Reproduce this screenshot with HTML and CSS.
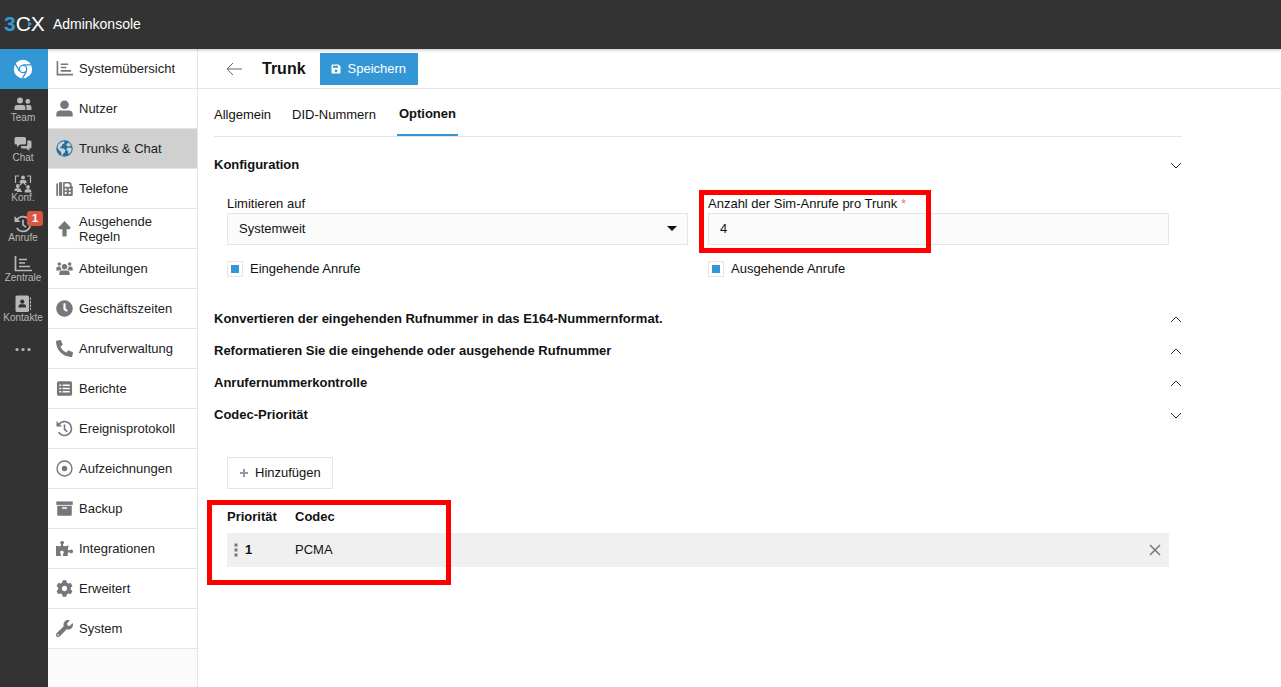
FILE: index.html
```html
<!DOCTYPE html>
<html lang="de">
<head>
<meta charset="utf-8">
<meta name="viewport" content="width=device-width, initial-scale=1">
<title>3CX Adminkonsole</title>
<link rel="stylesheet" href="styles.css">
</head>
<body>
<svg class="sprite" aria-hidden="true">
  <symbol id="chart" viewBox="0 0 18 18"><path d="M1.500 1v14.500H18M5 4.500h8M5 8h6M5 11.500h11" fill="none" stroke="currentColor" stroke-width="1.700"/></symbol>
  <symbol id="history" viewBox="0 0 18 18"><path d="M3 5a7.400 7.400 0 1 1-.2 8.200" fill="none" stroke="currentColor" stroke-width="1.700" transform="translate(0 -.2)"/><path d="M.5 1v6h6z" fill="currentColor"/><path d="M9 4.800v5l3 2.400" fill="none" stroke="currentColor" stroke-width="1.700"/></symbol>
</svg>
<header class="topbar">
  <span class="logo"><b>3</b>CX<svg class="logo-arrow" viewBox="0 0 4 6" aria-hidden="true"><path d="M0 0l4 3-4 3z"/></svg></span>
  <span class="product">Adminkonsole</span>
</header>
<div class="shell">
  <nav class="rail" aria-label="Anwendungen">
    <a href="#" class="rail-item active" aria-label="Webclient"><svg class="chrome" viewBox="0 0 20 20"><circle cx="10" cy="10" r="9.200" fill="#fff"/><circle cx="10" cy="10" r="3.700" fill="#fff" stroke="#3397d5" stroke-width="1.300"/><path d="M10 5.900h8.400M6.400 12.100L2.200 4.800M13.600 12.100L9.400 19.400" stroke="#3397d5" stroke-width="1.300"/></svg></a>
    <a href="#" class="rail-item"><svg class="rail-icon" viewBox="0 0 18 14"><circle cx="6" cy="3.500" r="3"/><circle cx="13.800" cy="4.400" r="2.400"/><path d="M.5 13v-2.300Q.5 8 3.200 8h5.600Q11.400 8 11.400 10.700V13zM12.600 13v-2.500q0-1.400-.8-2.500h3.500q2.200 0 2.200 2.300V13z"/></svg>Team</a>
    <a href="#" class="rail-item"><svg class="rail-icon" viewBox="0 0 18 14"><path d="M2 0h8.500q1.500 0 1.500 1.500V6q0 1.500-1.500 1.500H6L3 10V7.500H2Q.5 7.500.5 6V1.500Q.5 0 2 0z"/><path d="M13.300 3.500h2.700q1.500 0 1.500 1.500v5q0 1.500-1.500 1.500h-.7V14l-3-2.500H8.500Q7 11.500 7 10V9h4.800q1.500 0 1.500-1.500z"/></svg>Chat</a>
    <a href="#" class="rail-item"><svg class="rail-icon tall" viewBox="0 0 18 18"><path d="M5 1H1.500v7M13 1h3.500v7M3 16.500h5M9 7l-3 3M9 7l3 3" fill="none" stroke="currentColor" stroke-width="1.200"/><circle cx="9" cy="2.500" r="2"/><path d="M5.500 8V7Q5.500 5 7.500 5h3q2 0 2 2v1z"/><circle cx="3.800" cy="11" r="1.900"/><path d="M.5 16v-1q0-1.700 1.700-1.700h3.200q1.700 0 1.700 1.700v1z"/><circle cx="14" cy="12" r="1.900"/><path d="M10.700 17.500V16q0-1.700 1.700-1.700h3.200q1.700 0 1.700 1.700v1.500z"/></svg>Konf.</a>
    <a href="#" class="rail-item"><svg class="rail-icon tall"><use href="#history"/></svg>Anrufe<span class="badge">1</span></a>
    <a href="#" class="rail-item"><svg class="rail-icon tall"><use href="#chart"/></svg>Zentrale</a>
    <a href="#" class="rail-item"><svg class="rail-icon tall" viewBox="0 0 18 18"><path fill-rule="evenodd" d="M3 .5h10.500q1.500 0 1.500 1.500v13.500q0 1.500-1.500 1.500H3q-1.500 0-1.500-1.500V2Q1.500.5 3 .5zM8.200 4.500a2.100 2.100 0 1 0 .1 0zM4.500 12.500h7.500v-1q0-2.300-2-2.300H6.500q-2 0-2 2.300z"/><path d="M16 2.500h1v2.500h-1zM16 6h1v2.500h-1zM16 9.500h1V12h-1zM16 13h1v2h-1z"/></svg>Kontakte</a>
    <a href="#" class="rail-item" aria-label="Mehr"><svg class="dots" viewBox="0 0 18 18"><circle cx="3" cy="9.500" r="1.600"/><circle cx="9" cy="9.500" r="1.600"/><circle cx="15" cy="9.500" r="1.600"/></svg></a>
  </nav>
  <nav class="menu" aria-label="Hauptmenü">
    <a href="#" class="menu-item"><svg><use href="#chart"/></svg>Systemübersicht</a>
    <a href="#" class="menu-item"><svg viewBox="0 0 18 18"><circle cx="9" cy="5" r="4.600"/><path d="M.3 17.500v-2.200Q.3 11 4.500 11h9q4.200 0 4.200 4.300v2.200z"/></svg>Nutzer</a>
    <a href="#" class="menu-item selected"><svg viewBox="0 0 18 18"><circle cx="9" cy="9" r="8.700"/><path fill="#d0d0d0" d="M2.500 4.600Q4.700 1.800 8 1.400l1.200.9-.6 1.500-2 .9-.3 1.900-2.100 1 1 1.200 2.600.2 2.200 1.600-.6 2.500-1.800 1.400-.5 2.200-1.300-.6-.5-3.400-2-1.800L1.500 8zM11 4.700l1.300-1.500 1.700-.2 2.200 2.800.2 1.100-1.900-.8-1.700.7-1.600-.6zM11.500 8.500l2.800-.7 2.500 1.300-.7 3.200-2.200 2.500-1.100-.5v-2.500l-1.700-1.200z"/></svg>Trunks &amp; Chat</a>
    <a href="#" class="menu-item"><svg viewBox="0 0 18 18"><rect x=".3" y="3.500" width="1.900" height="13.500" rx=".9"/><rect x="3.200" y="2" width="3.300" height="15" rx="1.200"/><path fill-rule="evenodd" d="M8.500 2h6.300l1.700 1.700V6q1.300.4 1.300 1.600v7.900q0 1.500-1.500 1.500H8.500q-1 0-1-1V3q0-1 1-1zM9.200 3.700v3.500h5.600V4.700h-1v-1zM9.300 9v2.100h2V9zM13.500 9v2.100h2V9zM9.300 12.800v2.100h2v-2.100zM13.500 12.800v2.100h2v-2.100z"/></svg>Telefone</a>
    <a href="#" class="menu-item"><svg viewBox="0 0 18 18"><path d="M9 1l6.700 7.200-1.500 1.600h-2.900v6.700q0 .9-.9.900H7.600q-.9 0-.9-.9V9.800H3.800L2.300 8.200z"/></svg>Ausgehende Regeln</a>
    <a href="#" class="menu-item"><svg viewBox="0 0 18 18"><circle cx="3.500" cy="4.200" r="1.900"/><circle cx="14.500" cy="4.200" r="1.900"/><circle cx="9" cy="7.200" r="2.900"/><path d="M3.500 16v-1.800q0-3 3-3h5q3 0 3 3V16zM.3 9.500Q.3 7 2.500 7h2.200Q4.500 9 6 10.300q-1 .2-1.700.9h-4zM17.700 9.500Q17.700 7 15.500 7h-2.200q.2 2-1.300 3.300 1 .2 1.700.9h4z"/></svg>Abteilungen</a>
    <a href="#" class="menu-item"><svg viewBox="0 0 512 512"><path d="M256,8C119,8,8,119,8,256S119,504,256,504,504,393,504,256,393,8,256,8Zm92.490,313h0l-20,25a16,16,0,0,1-22.490,2.500h0l-67-49.720a40,40,0,0,1-15-31.230V112a16,16,0,0,1,16-16h32a16,16,0,0,1,16,16V256l58,42.500A16,16,0,0,1,348.490,321Z"/></svg>Geschäftszeiten</a>
    <a href="#" class="menu-item"><svg viewBox="0 0 512 512"><path d="M497.390 361.800l-112-48a24 24 0 0 0-28 6.900l-49.600 60.600A370.660 370.660 0 0 1 130.600 204.110l60.600-49.600a23.940 23.940 0 0 0 6.900-28l-48-112A24.160 24.160 0 0 0 122.600.610l-104 24A24 24 0 0 0 0 48c0 256.500 207.900 464 464 464a24 24 0 0 0 23.400-18.600l24-104a24.290 24.290 0 0 0-14.010-27.600z"/></svg>Anrufverwaltung</a>
    <a href="#" class="menu-item"><svg viewBox="0 0 18 18"><rect x="1" y="1.200" width="16" height="15.600" rx="2"/><path d="M3.500 5.500h2M7 5.500h7.500M3.500 9h2M7 9h7.500M3.500 12.500h2M7 12.500h7.500" stroke="#fff" stroke-width="1.500"/></svg>Berichte</a>
    <a href="#" class="menu-item"><svg><use href="#history"/></svg>Ereignisprotokoll</a>
    <a href="#" class="menu-item"><svg viewBox="0 0 18 18"><circle cx="9" cy="9" r="7.900" fill="none" stroke="currentColor" stroke-width="1.500"/><circle cx="9" cy="9" r="2.900"/></svg>Aufzeichnungen</a>
    <a href="#" class="menu-item"><svg viewBox="0 0 18 18"><path d="M.3 1.500h17.400v3.700H.3z"/><path fill-rule="evenodd" d="M1.300 6.200h15.400v9.500q0 1-1 1H2.300q-1 0-1-1zM6.500 7.800v1.400h5V7.800z"/></svg>Backup</a>
    <a href="#" class="menu-item"><svg viewBox="0 0 576 512"><path d="M519.442 288.651c-41.519 0-59.500 31.593-82.058 31.593C377.409 320.244 432 144 432 144s-196.288 80-196.288-3.297c0-35.827 36.288-46.250 36.288-85.985C272 19.216 243.885 0 210.539 0c-34.654 0-66.366 18.891-66.366 56.346 0 41.364 31.711 59.277 31.711 81.750C175.885 207.719 0 166.758 0 166.758v333.237s178.635 41.047 178.635-28.662c0-22.473-40-40.107-40-81.471 0-37.456 29.250-56.346 63.577-56.346 33.673 0 61.788 19.216 61.788 54.717 0 39.735-36.288 50.158-36.288 85.985 0 60.803 129.675 25.730 181.230 25.730 0 0-34.725-120.101 25.827-120.101 35.962 0 46.423 36.152 86.308 36.152C556.712 416 576 387.990 576 354.443c0-34.199-18.962-65.792-56.558-65.792z"/></svg>Integrationen</a>
    <a href="#" class="menu-item"><svg viewBox="0 0 512 512"><path d="M487.400 315.700l-42.600-24.600c4.300-23.200 4.300-47 0-70.200l42.600-24.600c4.900-2.800 7.100-8.600 5.500-14-11.100-35.600-30-67.800-54.700-94.600-3.800-4.100-10-5.100-14.800-2.300L380.800 110c-17.900-15.400-38.500-27.300-60.800-35.100V25.800c0-5.600-3.900-10.500-9.400-11.700-36.700-8.200-74.300-7.800-109.200 0-5.500 1.200-9.400 6.100-9.400 11.700V75c-22.200 7.900-42.800 19.800-60.800 35.100L88.700 85.500c-4.900-2.800-11-1.900-14.800 2.300-24.700 26.700-43.600 58.900-54.700 94.600-1.700 5.400.6 11.200 5.500 14L67.300 221c-4.300 23.200-4.300 47 0 70.200l-42.600 24.600c-4.900 2.800-7.100 8.600-5.500 14 11.100 35.600 30 67.800 54.700 94.600 3.800 4.100 10 5.100 14.800 2.300l42.600-24.600c17.900 15.400 38.500 27.300 60.800 35.100v49.200c0 5.600 3.900 10.500 9.400 11.700 36.700 8.200 74.300 7.800 109.200 0 5.500-1.200 9.400-6.100 9.400-11.700v-49.200c22.200-7.900 42.800-19.800 60.800-35.100l42.600 24.600c4.900 2.800 11 1.900 14.800-2.300 24.700-26.700 43.600-58.900 54.700-94.600 1.500-5.500-.7-11.300-5.600-14.100zM256 336c-44.100 0-80-35.900-80-80s35.900-80 80-80 80 35.900 80 80-35.900 80-80 80z"/></svg>Erweitert</a>
    <a href="#" class="menu-item"><svg viewBox="0 0 512 512"><path d="M507.730 109.100c-2.240-9.030-13.540-12.090-20.120-5.510l-74.360 74.360-67.880-11.310-11.310-67.880 74.360-74.360c6.620-6.620 3.430-17.900-5.660-20.160-47.380-11.740-99.550.91-136.580 37.930-39.640 39.640-50.550 97.100-34.050 147.200L18.740 402.760c-24.990 24.990-24.990 65.510 0 90.500 24.990 24.990 65.510 24.990 90.500 0l213.210-213.210c50.120 16.710 107.470 5.680 147.370-34.220 37.070-37.070 49.700-89.320 37.910-136.730zM64 472c-13.250 0-24-10.750-24-24 0-13.260 10.750-24 24-24s24 10.740 24 24c0 13.250-10.750 24-24 24z"/></svg>System</a>
  </nav>
  <main class="main">
    <div class="toolbar">
      <button type="button" class="back" aria-label="Zurück"><svg viewBox="0 0 16 14"><path d="M16 7H1M7 1L1 7l6 6" fill="none" stroke="currentColor"/></svg></button>
      <h1 class="title">Trunk</h1>
      <button type="submit" form="trunk" class="save"><svg viewBox="0 0 10 10"><path fill-rule="evenodd" d="M1.200.5h6.300l2 2v6.300q0 .7-.7.700H1.200q-.7 0-.7-.7V1.200Q.5.500 1.200.5zM2 1.800v2h5v-2zM5 5.500a1.400 1.400 0 1 0 .1 0z"/></svg>Speichern</button>
    </div>
    <form class="content" id="trunk">
      <nav class="tabs" aria-label="Trunk">
        <a href="#" class="tab">Allgemein</a>
        <a href="#" class="tab">DID-Nummern</a>
        <a href="#" class="tab current" aria-current="page">Optionen</a>
      </nav>
      <section>
        <h2><button type="button" class="panel-head" aria-expanded="true">Konfiguration<svg viewBox="0 0 12 12"><path d="M1 5l5 5 5-5"/></svg></button></h2>
        <div class="panel-body fields">
          <div class="column">
            <label for="limit">Limitieren auf</label>
            <div class="select-box">
              <select id="limit" class="control"><option>Systemweit</option></select>
              <svg class="caret" viewBox="0 0 10 5" aria-hidden="true"><path d="M0 0h10L5 5z"/></svg>
            </div>
            <label class="check"><input type="checkbox" checked>Eingehende Anrufe</label>
          </div>
          <div class="column">
            <label for="calls">Anzahl der Sim-Anrufe pro Trunk <span class="required">*</span></label>
            <input id="calls" class="control" type="text" value="4" required>
            <label class="check"><input type="checkbox" checked>Ausgehende Anrufe</label>
            <div class="mark mark-calls"></div>
          </div>
        </div>
      </section>
      <h2><button type="button" class="panel-head" aria-expanded="false">Konvertieren der eingehenden Rufnummer in das E164-Nummernformat.<svg viewBox="0 0 12 12"><path d="M1 10l5-5 5 5"/></svg></button></h2>
      <h2><button type="button" class="panel-head" aria-expanded="false">Reformatieren Sie die eingehende oder ausgehende Rufnummer<svg viewBox="0 0 12 12"><path d="M1 10l5-5 5 5"/></svg></button></h2>
      <h2><button type="button" class="panel-head" aria-expanded="false">Anrufernummerkontrolle<svg viewBox="0 0 12 12"><path d="M1 10l5-5 5 5"/></svg></button></h2>
      <section>
        <h2><button type="button" class="panel-head" aria-expanded="true">Codec-Priorität<svg viewBox="0 0 12 12"><path d="M1 5l5 5 5-5"/></svg></button></h2>
        <div class="panel-body codecs">
          <button type="button" class="add"><svg viewBox="0 0 8 8"><path d="M4 0v8M0 4h8" fill="none" stroke="currentColor" stroke-width="2"/></svg>Hinzufügen</button>
          <div class="table-box">
            <table class="codec-table">
              <thead><tr><th class="prio">Priorität</th><th>Codec</th><th class="remove"></th></tr></thead>
              <tbody><tr>
                <td class="prio"><span class="rank"><svg viewBox="0 0 4 14" aria-hidden="true"><path d="M.5.500h3v3h-3zM.5 5.500h3v3h-3zM.5 10.500h3v3h-3z"/></svg>1</span></td>
                <td>PCMA</td>
                <td class="remove"><button type="button" class="delete" aria-label="Entfernen"><svg viewBox="0 0 12 12"><path d="M1 1l10 10M11 1L1 11" fill="none" stroke="currentColor" stroke-width="1.500"/></svg></button></td>
              </tr></tbody>
            </table>
            <div class="mark mark-codec"></div>
          </div>
        </div>
      </section>
    </form>
  </main>
</div>
</body>
</html>
```
FILE: styles.css
```css
* { box-sizing: border-box; }

body {
  margin: 0;
  min-height: 100vh;
  display: flex;
  flex-direction: column;
  background: #fff;
  color: #111;
  font: 13px/15px "Liberation Sans", Arial, sans-serif;
}

a { color: inherit; text-decoration: none; }
button, input, select { font: inherit; color: inherit; }
button { padding: 0; border: 0; background: none; cursor: pointer; }
svg { display: block; flex: none; fill: currentColor; }
h1, h2 { margin: 0; }
.sprite { position: absolute; width: 0; height: 0; }

.topbar {
  position: relative;
  display: flex;
  align-items: center;
  gap: 8px;
  height: 49px;
  padding: 0 0 2px 4px;
  background: #333;
  color: #fff;
  box-shadow: 0 1px 3px rgba(0, 0, 0, .25);
}
.logo { position: relative; font-size: 21px; line-height: 24px; }
.logo b { color: #3397d5; }
.logo-arrow { position: absolute; left: 24px; top: 9px; width: 4px; height: 6px; color: #3397d5; }
.product { font-size: 14px; line-height: 16px; }

.shell { flex: 1; display: flex; }

.rail { flex: none; width: 48px; background: #333; color: #b8b8b8; }
.rail-item {
  position: relative;
  display: flex;
  flex-direction: column;
  align-items: center;
  justify-content: center;
  height: 40px;
  padding-right: 2px;
  font-size: 10px;
  line-height: 10px;
}
.rail-item.active { background: #3397d5; }
.rail-icon { width: 18px; height: 14px; margin: 2px 0; }
.rail-icon.tall { height: 18px; margin: 0; }
.dots { width: 18px; height: 18px; }
.chrome { width: 20px; height: 20px; }
.badge {
  position: absolute;
  top: 2px;
  left: 27px;
  width: 16px;
  height: 15px;
  border-radius: 3px;
  background: #d9573f;
  color: #fff;
  font-weight: bold;
  font-size: 11px;
  line-height: 15px;
  text-align: center;
}

.menu { flex: none; width: 150px; border-right: 1px solid #e5e5e5; background: #fbfbfb; }
.menu-item {
  display: flex;
  align-items: center;
  gap: 6px;
  height: 40px;
  padding: 0 20px 0 8px;
  border-bottom: 1px solid #e5e5e5;
  background: #fff;
  color: #222;
}
.menu-item svg { width: 17px; height: 17px; color: #777; }
.menu-item.selected { background: #d0d0d0; }
.menu-item.selected svg { color: #1f6f9f; }

.main { flex: 1; min-width: 0; }
.toolbar {
  display: flex;
  align-items: center;
  height: 40px;
  padding-left: 28px;
  border-bottom: 1px solid #e5e5e5;
}
.back { color: #666; }
.back svg { width: 16px; height: 14px; }
.title { margin: 0 14px 0 20px; font-size: 16px; line-height: 20px; }
.save {
  display: flex;
  align-items: center;
  gap: 7px;
  height: 32px;
  padding: 0 12px 0 11px;
  background: #3397d5;
  color: #fff;
}
.save svg { width: 10px; height: 10px; }

.content { max-width: 1000px; padding: 0 16px; }
.tabs { display: flex; gap: 21px; height: 48px; margin-bottom: 11px; border-bottom: 1px solid #e5e5e5; }
.tab { padding-top: 18px; }
.tab.current {
  height: 47px;
  padding: 17px 2px 0;
  border-bottom: 2px solid #3397d5;
  font-weight: bold;
}

.panel-head {
  display: flex;
  align-items: center;
  justify-content: space-between;
  width: 100%;
  height: 32px;
  text-align: left;
  font: bold 13px/15px "Liberation Sans", Arial, sans-serif;
}
.panel-head svg { width: 12px; height: 12px; fill: none; stroke: #333; }
.panel-body { padding: 16px 13px 25px; }
.fields { display: grid; grid-template-columns: 1fr 1fr; gap: 20px; }
.column { position: relative; display: flex; flex-direction: column; }
.column > label:first-child { margin-bottom: 2px; }
.required { color: #e08070; }
.select-box { position: relative; }
.control {
  appearance: none;
  width: 100%;
  height: 32px;
  padding: 0 11px 2px;
  border: 1px solid #e5e5e5;
  border-radius: 0;
  background: #fbfbfb;
}
.caret { position: absolute; right: 11px; top: 13px; width: 10px; height: 5px; }
.check { display: flex; align-items: center; gap: 7px; margin-top: 16px; line-height: 14px; }
.check input {
  appearance: none;
  width: 16px;
  height: 16px;
  margin: 0;
  padding: 3px;
  border: 1px solid #e5e5e5;
  background: #3397d5 content-box;
}

.mark { position: absolute; border: 5px solid #f00; pointer-events: none; }
.mark-calls { left: -9px; top: -6px; width: 232px; height: 63px; }
.mark-codec { left: -20px; top: 0; width: 244px; height: 85px; }

.codecs { padding-top: 27px; }
.add {
  display: flex;
  align-items: center;
  gap: 7px;
  height: 32px;
  padding: 0 11px 1px 12px;
  border: 1px solid #e5e5e5;
}
.add svg { width: 8px; height: 8px; color: #999; }
.table-box { position: relative; margin-top: 11px; }
.codec-table { width: 100%; border-collapse: collapse; }
.codec-table th, .codec-table td { padding: 0 0 1px; text-align: left; }
.codec-table th { height: 33px; }
.codec-table td { height: 34px; background: #f0f0f0; }
.codec-table tbody tr { box-shadow: inset 0 1px #e5e5e5, inset 0 -1px #e5e5e5; }
.codec-table .prio { width: 68px; font-weight: bold; }
.codec-table .remove { width: 32px; }
.rank { display: flex; align-items: center; gap: 7px; padding-left: 7px; }
.rank svg { width: 4px; height: 14px; color: #777; }
.delete { display: block; margin-left: 12px; color: #777; }
.delete svg { width: 12px; height: 12px; }
```
